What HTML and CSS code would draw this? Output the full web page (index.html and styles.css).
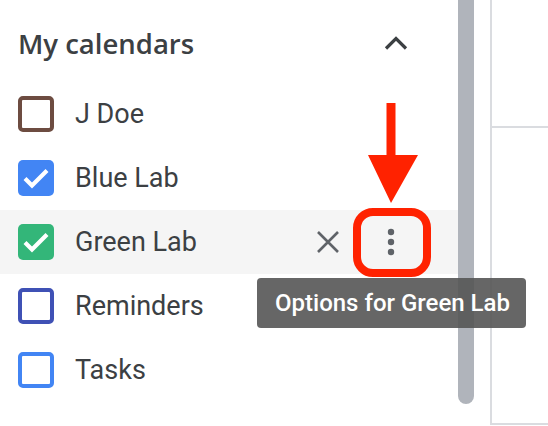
FILE: index.html
```html
<!DOCTYPE html>
<html>
<head>
<meta charset="utf-8">
<link rel="stylesheet" href="styles.css">
</head>
<body>
<div class="app">
  <aside class="sidebar">
    <div class="section-head">
      <span class="section-title">My calendars</span>
      <button class="icon-btn chevron-btn" aria-label="Collapse">
        <svg width="24" height="14" viewBox="0 0 24 14"><path d="M2 12.5 L12 2.5 L22 12.5" fill="none" stroke="#3c4043" stroke-width="3.2"/></svg>
      </button>
    </div>
    <ul class="cal-list">
      <li class="cal-row">
        <span class="cbox cbox-brown"></span>
        <span class="cal-name">J Doe</span>
      </li>
      <li class="cal-row">
        <span class="cbox cbox-blue checked">
          <svg width="36" height="36" viewBox="0 0 36 36"><path d="M7 18.5 L14 25.5 L29 10.5" fill="none" stroke="#fff" stroke-width="4.2"/></svg>
        </span>
        <span class="cal-name">Blue Lab</span>
      </li>
      <li class="cal-row hover">
        <span class="cbox cbox-green checked">
          <svg width="36" height="36" viewBox="0 0 36 36"><path d="M7 18.5 L14 25.5 L29 10.5" fill="none" stroke="#fff" stroke-width="4.2"/></svg>
        </span>
        <span class="cal-name">Green Lab</span>
        <span class="row-actions">
          <button class="icon-btn" aria-label="Remove">
            <svg width="24" height="24" viewBox="0 0 24 24"><path d="M2 2 L22 22 M22 2 L2 22" fill="none" stroke="#5f6368" stroke-width="2.6"/></svg>
          </button>
          <button class="icon-btn" aria-label="Options for Green Lab">
            <svg width="8" height="28" viewBox="0 0 8 28"><circle cx="4" cy="4" r="3.2" fill="#5f6368"/><circle cx="4" cy="14" r="3.2" fill="#5f6368"/><circle cx="4" cy="24" r="3.2" fill="#5f6368"/></svg>
          </button>
        </span>
      </li>
      <li class="cal-row">
        <span class="cbox cbox-indigo"></span>
        <span class="cal-name">Reminders</span>
      </li>
      <li class="cal-row">
        <span class="cbox cbox-sky"></span>
        <span class="cal-name">Tasks</span>
      </li>
    </ul>
  </aside>
  <div class="scrollbar"><div class="thumb"></div></div>
  <div class="gutter"></div>
  <div class="grid">
    <div class="cell cell-top"></div>
    <div class="cell cell-mid"></div>
  </div>

  <svg class="callout-arrow" width="60" height="110" viewBox="0 0 60 110">
    <path d="M18.5 0 H27.5 V52 H50 L23 100 L0 52 H18.5 Z" fill="#ff2200"/>
  </svg>
  <div class="callout-ring"></div>
  <div class="tooltip">Options for Green Lab</div>
</div>
</body>
</html>
```

FILE: styles.css
```css
* { box-sizing: border-box; }
html, body {
  margin: 0;
  padding: 0;
  background: #fff;
}
body {
  font-family: Roboto, "Liberation Sans", Arial, sans-serif;
  color: #3c4043;
  width: 548px;
  height: 426px;
  overflow: hidden;
}
.app {
  position: relative;
  display: flex;
  width: 548px;
  height: 426px;
}
.sidebar {
  width: 458px;
  flex: none;
}
.section-head {
  display: flex;
  align-items: center;
  height: 82px;
  padding: 4px 38px 0 18px;
}
.section-title {
  font-family: "Open Sans", Roboto, sans-serif;
  font-weight: 600;
  font-size: 27.5px;
  color: #3c4043;
}
.icon-btn {
  border: 0;
  background: transparent;
  padding: 0;
  width: 48px;
  height: 48px;
  display: flex;
  align-items: center;
  justify-content: center;
}
.chevron-btn {
  margin-left: auto;
}
.cal-list {
  list-style: none;
  margin: 0;
  padding: 0;
}
.cal-row {
  display: flex;
  align-items: center;
  height: 64px;
  padding-left: 18px;
}
.cal-row.hover {
  background: #f5f5f5;
}
.cbox {
  width: 36px;
  height: 36px;
  flex: none;
  border: 4px solid;
  border-radius: 5px;
  display: flex;
  align-items: center;
  justify-content: center;
}
.cbox svg { flex: none; }
.cbox.checked { border: 0; }
.cbox-brown { border-color: #6d4c41; }
.cbox-blue { background: #4285f4; }
.cbox-green { background: #33b679; }
.cbox-indigo { border-color: #3f51b5; }
.cbox-sky { border-color: #4285f4; }
.cal-name {
  margin-left: 21px;
  font-size: 27px;
  color: #3c4043;
}
.row-actions {
  margin-left: auto;
  display: flex;
  gap: 15px;
  padding-right: 43px;
}
.scrollbar {
  width: 16px;
  flex: none;
}
.thumb {
  height: 404px;
  background: #b0b4bb;
  border-radius: 0 0 8px 8px;
}
.gutter {
  width: 16px;
  flex: none;
}
.grid {
  flex: 1;
  border-left: 2px solid #dadce0;
  height: 425px;
  display: flex;
  flex-direction: column;
}
.cell {
  border-bottom: 2px solid #dadce0;
}
.cell-top { height: 128px; }
.cell-mid { height: 297px; }

.callout-arrow {
  position: absolute;
  left: 368px;
  top: 103px;
}
.callout-ring {
  position: absolute;
  left: 353px;
  top: 208px;
  width: 78px;
  height: 69px;
  border: 8px solid #ff2200;
  border-radius: 20px;
}
.tooltip {
  position: absolute;
  left: 257px;
  top: 278px;
  width: 269px;
  height: 50px;
  border-radius: 4px;
  background: rgba(85, 85, 85, 0.9);
  color: #fff;
  font-size: 24px;
  font-weight: 500;
  padding-left: 18px;
  display: flex;
  align-items: center;
  white-space: nowrap;
}
```
